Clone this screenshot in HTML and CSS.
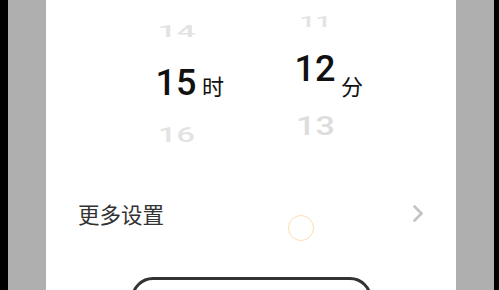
FILE: index.html
```html
<!DOCTYPE html>
<html lang="zh">
<head>
<meta charset="utf-8">
<link rel="stylesheet" href="styles.css">
</head>
<body>
<div class="edge edge-left"></div>
<div class="shade"></div>
<main class="sheet">
  <section class="picker">
    <div class="group group-hour">
      <div class="wheel wheel-hour">
        <div class="item"><span class="num far">14</span></div>
        <div class="item"><span class="num cur">15</span></div>
        <div class="item"><span class="num near">16</span></div>
      </div>
      <div class="unit">时</div>
    </div>
    <div class="group group-min">
      <div class="wheel wheel-min">
        <div class="item item-m1"><span class="num top">11</span></div>
        <div class="item item-m2"><span class="num cur">12</span></div>
        <div class="item item-m3"><span class="num mid">13</span></div>
      </div>
      <div class="unit">分</div>
    </div>
  </section>
  <div class="row">
    <span class="row-label">更多设置</span>
    <svg class="chev" width="12" height="19" viewBox="0 0 12 19"><polyline points="2.5,2.5 9.5,9.5 2.5,16.5" fill="none" stroke="#c4c4c4" stroke-width="2.8" stroke-linecap="round" stroke-linejoin="round"/></svg>
  </div>
  <div class="btn"></div>
  <div class="touch"></div>
</main>
<div class="shade"></div>
<div class="edge edge-right"></div>
</body>
</html>
```
FILE: styles.css
```css
html, body {
  margin: 0;
  padding: 0;
}
body {
  width: 499px;
  height: 290px;
  overflow: hidden;
  display: flex;
  background: #000;
  font-family: "Roboto", "Noto Sans CJK SC", sans-serif;
}
.edge-left { width: 8px; background: #000; flex-shrink: 0; }
.edge-right { width: 5px; background: #000; flex-shrink: 0; }
.shade {
  width: 38px;
  flex-shrink: 0;
  background: #afafaf;
}
.sheet {
  position: relative;
  width: 410px;
  height: 290px;
  overflow: hidden;
  flex-shrink: 0;
  background: #fff;
  display: flex;
  flex-direction: column;
}
.sheet > * { flex-shrink: 0; }
.picker {
  display: flex;
  height: 160px;
  padding-left: 110px;
}
.group {
  display: flex;
  align-items: flex-start;
}
.group-hour { margin-right: 71px; }
.wheel {
  display: flex;
  flex-direction: column;
  width: 40px;
}
.wheel-hour { padding-top: 5px; }
.item {
  height: 52px;
  display: flex;
  align-items: center;
  justify-content: center;
}
.item-m1 { height: 44px; }
.item-m2 { height: 49px; }
.item-m3 { height: 66px; }
.num {
  display: inline-block;
  font-size: 36px;
  font-weight: 500;
  line-height: 1;
  color: #111;
}
.num.far { color: #e3e3e3; transform: scale(0.93, 0.48); }
.num.near { color: #e3e3e3; transform: scale(0.9, 0.55); }
.num.top { color: #e3e3e3; transform: scale(0.78, 0.42); }
.num.mid { color: #dddddd; transform: scale(0.95, 0.72); }
.unit {
  margin-left: 6px;
  margin-top: 74px;
  font-size: 22px;
  line-height: 22px;
  color: #111;
  font-family: "Noto Sans CJK SC", sans-serif;
}
.row {
  display: flex;
  align-items: center;
  justify-content: space-between;
  height: 44px;
  margin-top: 31px;
  padding: 0 32px 0 32px;
}
.row-label {
  font-family: "Noto Sans CJK SC", sans-serif;
  font-size: 21.5px;
  color: #333;
}
.btn {
  margin: 42px 0 0 85px;
  width: 235px;
  height: 80px;
  border: 3px solid #333;
  border-radius: 22px;
}
.touch {
  position: absolute;
  left: 242px;
  top: 215px;
  width: 24px;
  height: 24px;
  border: 1.5px solid #fbdfb3;
  border-radius: 50%;
}
```
